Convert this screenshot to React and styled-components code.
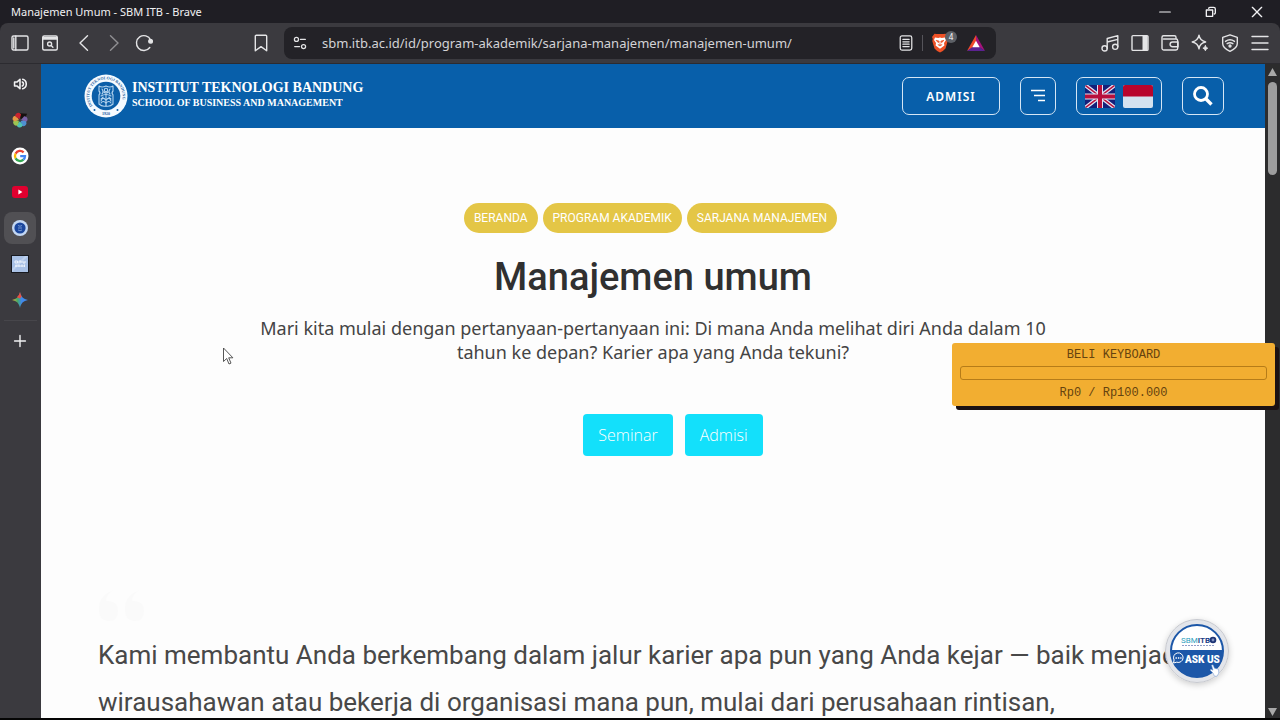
import React from 'react';
import styled, { createGlobalStyle } from 'styled-components';

const GlobalStyle = createGlobalStyle`
  * {
    box-sizing: border-box;
  }
  body {
    margin: 0;
    background: #000000;
    font-family: 'Noto Sans', sans-serif;
  }
  h1, p, ul {
    margin: 0;
    padding: 0;
  }
  button {
    padding: 0;
    border: 0;
    background: none;
    color: inherit;
    font: inherit;
  }
  a {
    color: inherit;
    text-decoration: none;
  }
  svg {
    display: block;
    flex: none;
  }
`;

const Window = styled.div`
  position: relative;
  display: flex;
  flex-direction: column;
  height: 100vh;
  overflow: hidden;
  background: #1f1e24;
  border-bottom: 2px solid #050505;
`;

const TitleBar = styled.header`
  display: flex;
  flex: none;
  align-items: center;
  justify-content: space-between;
  height: 23px;
  padding-left: 11px;
  color: #f1f1f3;
  font-size: 11px;
`;

const WindowButtons = styled.div`
  display: flex;
`;

const WindowButton = styled.button`
  display: grid;
  place-items: center;
  width: 46px;
  height: 23px;
`;

const Toolbar = styled.div`
  display: grid;
  grid-template-columns: 1fr minmax(0, 712px) 1fr;
  flex: none;
  align-items: center;
  height: 41px;
  border-radius: 8px 8px 0 0;
  border-bottom: 1px solid #2c2b30;
  background: #3b3a3f;
  color: #e4e4e6;
`;

const ToolGroup = styled.div`
  display: flex;
  align-items: center;
  justify-content: ${(props) => (props.$end ? 'flex-end' : 'space-between')};
  padding: ${(props) => (props.$end ? '0 5px' : '0 8px 0 5px')};
`;

const NavButtons = styled.div`
  display: flex;
  gap: 4px;
`;

const ToolButton = styled.button`
  display: grid;
  place-items: center;
  width: 30px;
  height: 30px;
  opacity: ${(props) => (props.disabled ? 0.5 : 1)};
`;

const Pair = styled.div`
  display: flex;
`;

const AddressBar = styled.div`
  display: flex;
  align-items: center;
  height: 32px;
  padding: 0 5px 0 8px;
  border-radius: 8px;
  background: #232227;
`;

const AddressInput = styled.input`
  flex: 1;
  min-width: 0;
  margin-left: 14px;
  padding: 0;
  border: 0;
  outline: 0;
  background: none;
  color: #d3d3d6;
  font-family: 'Noto Sans', sans-serif;
  font-size: 13px;
`;

const AddressIcons = styled.div`
  display: flex;
  align-items: center;
  gap: 8px;
`;

const ShieldGroup = styled.div`
  display: flex;
  align-items: center;
  gap: 4px;
`;

const AddressDivider = styled.span`
  width: 1px;
  height: 16px;
  background: #55545a;
`;

const ShieldButton = styled.button`
  position: relative;
  width: 26px;
  height: 24px;
`;

const ShieldCount = styled.span`
  position: absolute;
  top: 0;
  right: 0;
  width: 12px;
  height: 12px;
  border-radius: 6px;
  background: #5d6066;
  color: #ffffff;
  font-size: 8px;
  line-height: 12px;
`;

const Body = styled.div`
  display: flex;
  flex: 1;
  min-height: 0;
`;

const Sidebar = styled.nav`
  display: flex;
  flex: none;
  flex-direction: column;
  gap: 4px;
  width: 41px;
  padding: 4px;
  background: #3b3a3f;
  color: #f1f1f3;
`;

const SideTab = styled.button`
  display: grid;
  place-items: center;
  width: 32px;
  height: 32px;
  border-radius: 8px;
  background: ${(props) => (props.$active ? '#515054' : 'transparent')};
`;

const SideDivider = styled.span`
  height: 1px;
  background: #47464b;
`;

const Page = styled.div`
  flex: 1;
  min-width: 0;
  overflow: hidden;
  background: #fdfdfd;
`;

const SiteHeader = styled.header`
  display: flex;
  align-items: center;
  justify-content: space-between;
  height: 64px;
  padding: 0 41px 0 43px;
  background: #085faa;
  color: #ffffff;
`;

const Brand = styled.a`
  display: flex;
  align-items: center;
  gap: 4px;
  font-family: 'Liberation Serif', serif;
  font-weight: 700;
`;

const BrandText = styled.span`
  padding-bottom: 3px;
`;

const BrandName = styled.span`
  display: block;
  font-size: 14px;
  line-height: 16px;
`;

const BrandSchool = styled.span`
  display: block;
  font-size: 10px;
  line-height: 13px;
`;

const SiteActions = styled.div`
  display: flex;
  gap: 20px;
`;

const OutlineButton = styled.button`
  display: flex;
  align-items: center;
  justify-content: center;
  gap: 8px;
  min-width: ${(props) => props.$width};
  height: 38px;
  border: 1px solid #d5e6f5;
  border-radius: 7px;
  font-size: 12px;
  font-weight: 600;
  letter-spacing: 1px;
`;

const Hero = styled.section`
  display: flex;
  flex-direction: column;
  align-items: center;
  padding-top: 75px;
`;

const Crumbs = styled.nav`
  display: flex;
`;

const Crumb = styled.a`
  margin-right: 5px;
  padding: 0 10px;
  border-radius: 15px;
  background: #e4c646;
  color: #ffffff;
  font-family: Roboto, sans-serif;
  font-size: 12px;
  font-weight: 400;
  line-height: 30px;
`;

const Title = styled.h1`
  margin-top: 20px;
  color: #303030;
  font-family: Roboto, sans-serif;
  font-size: 38px;
  font-weight: 500;
  line-height: 48px;
`;

const Lead = styled.p`
  max-width: 816px;
  margin-top: 15px;
  color: #444444;
  font-size: 18px;
  line-height: 24px;
  text-align: center;
`;

const LinkList = styled.ul`
  display: flex;
  gap: 12px;
  margin-top: 50px;
  padding-left: 40px;
  list-style: none;
`;

const LinkButton = styled.a`
  display: block;
  padding: 0 15px;
  border-radius: 4px;
  background: #13e0fb;
  color: #ffffff;
  font-family: 'Open Sans', sans-serif;
  font-size: 16px;
  font-weight: 300;
  line-height: 42px;
`;

const Quote = styled.section`
  padding: 134px 57px 0;
`;

const QuoteText = styled.p`
  margin-top: 10px;
  color: #484848;
  font-family: Roboto, sans-serif;
  font-size: 26px;
  line-height: 47px;
`;

const ScrollTrack = styled.div`
  display: flex;
  flex: none;
  flex-direction: column;
  align-items: center;
  justify-content: space-between;
  width: 15px;
  padding: 4px 0 2px;
  background: #2c2c2d;
`;

const ScrollThumb = styled.div`
  width: 9px;
  height: 93px;
  margin: 6px 0 auto;
  border-radius: 5px;
  background: #9e9e9e;
`;

const GoalWidget = styled.aside`
  position: absolute;
  top: 343px;
  right: 5px;
  width: 323px;
  padding: 4px 8px 5px;
  border-radius: 3px;
  background: #f2ae31;
  box-shadow: 4px 4px 0 #1b1113;
  color: #65430f;
  font-family: 'Liberation Mono', monospace;
  font-size: 12px;
  line-height: 16px;
  text-align: center;
`;

const GoalProgress = styled.progress`
  display: block;
  width: 100%;
  height: 14px;
  margin: 3px 0 5px;
  border: 1px solid #b67c18;
  border-radius: 3px;
  appearance: none;
  background: transparent;
  &::-webkit-progress-bar {
    background: transparent;
  }
`;

const AskButton = styled.button`
  position: absolute;
  right: 51px;
  bottom: 35px;
  border-radius: 50%;
  box-shadow: 0 2px 6px #00000030;
`;

const Pointer = styled.div`
  position: absolute;
  top: 347px;
  left: 222px;
`;

const Icon = ({ size = 18, children }) => (
  <svg
    width={size}
    height={size}
    viewBox='0 0 18 18'
    fill='none'
    stroke='currentColor'
    strokeWidth='1.4'
    strokeLinecap='round'
    strokeLinejoin='round'
  >
    {children}
  </svg>
);

const toolbarIcons = {
  panel: (
    <>
      <rect x='1' y='2' width='16' height='14' rx='1.5' />
      <path d='M4.8 2v14M2.8 4v10' />
    </>
  ),
  tabSearch: (
    <>
      <rect x='1.7' y='2' width='14.6' height='14' rx='1.5' />
      <path d='M2 3.6h14M2 5h14' />
      <circle cx='8.6' cy='10' r='2' />
      <path d='M10.2 11.6l1.7 1.7' />
    </>
  ),
  back: <path d='M12.5 1.8L5 9l7.5 7.2' />,
  forward: <path d='M5.5 1.8L13 9l-7.5 7.2' />,
  reload: (
    <>
      <path d='M15.6 6A7.4 7.4 0 1 0 14.8 13.5' />
      <circle cx='15.6' cy='7.3' r='1.8' fill='currentColor' />
    </>
  ),
  bookmark: <path d='M3.3 2.2q0-1 1-1h9.4q1 0 1 1v14.6L9 12.6l-5.7 4.2z' />,
  music: (
    <>
      <circle cx='3.6' cy='14.4' r='2.6' />
      <circle cx='14.2' cy='12.8' r='2.6' />
      <path d='M6.2 14.4V4.5L16.8 1.6v11.2M6.2 8l10.6-2.6' />
    </>
  ),
  sidePanel: (
    <>
      <rect x='1' y='1.6' width='16' height='14.8' rx='1' />
      <path d='M11.5 2h5v14h-5z' fill='currentColor' stroke='none' />
    </>
  ),
  wallet: (
    <>
      <path d='M15 5V3.2a1.5 1.5 0 0 0-1.5-1.5h-11A1.5 1.5 0 0 0 1 3.2v11.3A1.7 1.7 0 0 0 2.7 16H15a1.7 1.7 0 0 0 1.7-1.7V6.7A1.7 1.7 0 0 0 15 5H2.5' />
      <path d='M17 8h-5.5a2.4 2.4 0 0 0 0 4.8H17z' />
    </>
  ),
  sparkle: (
    <>
      <path d='M8 1.2C8.6 5.2 10.4 7 14.6 8 10.4 8.8 8.6 10.6 8 14.8 7.3 10.6 5.5 8.8 1.2 8 5.5 7 7.3 5.2 8 1.2z' />
      <path d='M14.4 11.6q.4 2.2 2.4 2.6-2 .5-2.4 2.6-.5-2.1-2.5-2.6 2-.4 2.5-2.6z' fill='currentColor' strokeWidth='.8' />
    </>
  ),
  vpn: (
    <>
      <path d='M9 .8l7.3 2.5v6.2c0 3.3-3.2 6-7.3 7.8-4.1-1.8-7.3-4.5-7.3-7.8V3.3z' />
      <path d='M4.5 7.4Q9 4.2 13.5 7.4M6.1 9.7Q9 7.8 11.9 9.7' />
      <circle cx='9' cy='12' r='1' fill='currentColor' />
    </>
  ),
  menu: <path d='M1 2.5h16M1 9h16M1 15.5h16' />,
};

const rightTools = [
  { icon: 'music', label: 'Musik' },
  { icon: 'sidePanel', label: 'Panel samping' },
  { icon: 'wallet', label: 'Dompet' },
  { icon: 'sparkle', label: 'Asisten' },
  { icon: 'vpn', label: 'VPN' },
  { icon: 'menu', label: 'Menu' },
];

const petals = ['#16100f', '#7a62a8', '#4f8fd0', '#4fc3b4', '#9cc552', '#e39a45', '#c8232f'];

const SpeakerIcon = () => (
  <Icon size={14}>
    <path d='M2 6.500h3l4-3.500v12l-4-3.500H2z' strokeWidth='2' />
    <path d='M12.500 2.800a6.500 6.500 0 0 1 0 12.400M12 6.400a3 3 0 0 1 0 5.200' strokeWidth='2' />
  </Icon>
);

const PetalIcon = () => (
  <svg width='18' height='18' viewBox='-9 -9 18 18'>
    {petals.map((color, index) => (
      <path
        key={color}
        d={index === 0 ? 'M0-1.2L-3.6-5.6 3-9 3.4-5z' : 'M0-1.2L-3-4.6Q-2.8-7.6 0-7.6T3-4.6z'}
        fill={color}
        transform={`rotate(${index * 51.4 + 30})`}
      />
    ))}
  </svg>
);

const GoogleIcon = () => (
  <svg width='18' height='18' viewBox='0 0 18 18' fill='none' strokeWidth='2.3'>
    <circle cx='9' cy='9' r='8.5' fill='#ffffff' />
    <path d='M12.6 5.4A5 5 0 0 0 4.6 6.6' stroke='#ea4335' />
    <path d='M4.6 6.6a5 5 0 0 0 0 4.8' stroke='#fbbc05' />
    <path d='M4.6 11.4a5 5 0 0 0 7.8 1.3' stroke='#34a853' />
    <path d='M12.4 12.7A5 5 0 0 0 14 9.2H9.2' stroke='#4285f4' />
  </svg>
);

const YoutubeIcon = () => (
  <svg width='16' height='12' viewBox='0 0 16 12'>
    <rect width='16' height='12' rx='3' fill='#e0002f' />
    <path d='M6.4 3.6v4.8L10.4 6z' fill='#ffffff' />
  </svg>
);

const CampusIcon = () => (
  <svg width='16' height='16' viewBox='0 0 16 16' fill='none'>
    <circle cx='8' cy='8' r='8' fill='#c3d7f3' />
    <circle cx='8' cy='8' r='5.6' fill='#1b479e' />
    <path d='M6 5.500q2 1.500 4 0M6 8h4M6 10q2 1.500 4 0' stroke='#8aabdd' strokeWidth='.8' />
  </svg>
);

const TileIcon = () => (
  <svg width='18' height='18' viewBox='0 0 18 18' fill='none'>
    <rect x='.5' y='.5' width='17' height='17' fill='#a9c1e6' stroke='#17191f' />
    <path d='M1 14L14 1h3L1 17z' fill='#bed1ee' />
    <path d='M4 6h2.5v2H4zM8 8V6h2v2M12 6v2h2V6M4 11h10M5 9.5V12M8 9.5V12M11 9.5V12M13.5 9.5V12' stroke='#edf3fc' />
  </svg>
);

const GeminiIcon = () => (
  <svg width='16' height='16' viewBox='0 0 16 16'>
    <defs>
      <linearGradient id='gemini' x1='0' y1='.5' x2='1' y2='.5'>
        <stop offset='0' stopColor='#e6b52e' />
        <stop offset='.35' stopColor='#45a96b' />
        <stop offset='.6' stopColor='#4189ea' />
      </linearGradient>
    </defs>
    <path d='M8 0c.9 4.7 3.3 7.1 8 8-4.7.9-7.1 3.3-8 8-.9-4.7-3.3-7.1-8-8 4.7-.9 7.1-3.3 8-8z' fill='url(#gemini)' />
    <path d='M8 0c.3 1.800.9 3.200 1.700 4.500L8 6.500l-3.200-1.200Q7.200 3.800 8 0z' fill='#e84f43' />
  </svg>
);

const sideTabs = [
  { label: 'Suara', icon: <SpeakerIcon /> },
  { label: 'Warna', icon: <PetalIcon /> },
  { label: 'Google', icon: <GoogleIcon /> },
  { label: 'YouTube', icon: <YoutubeIcon /> },
  { label: 'SBM ITB', icon: <CampusIcon />, active: true },
  { label: 'Catatan', icon: <TileIcon /> },
  { label: 'Gemini', icon: <GeminiIcon /> },
];

const Emblem = () => (
  <svg width='44' height='44' viewBox='0 0 44 44' fill='none'>
    <defs>
      <path id='ring' d='M8.600 32A16.700 16.700 0 1 1 35.400 32' />
    </defs>
    <circle cx='22' cy='22' r='21.500' fill='#f5faff' />
    <circle cx='22' cy='22' r='14.300' fill='#0b5ea8' />
    <text fill='#23609e' fontFamily='Liberation Serif, serif' fontSize='4'>
      <textPath href='#ring'>INSTITUT TEKNOLOGI BANDUNG</textPath>
    </text>
    <text x='22' y='41' textAnchor='middle' fill='#23609e' fontFamily='Liberation Serif, serif' fontSize='4'>
      1920
    </text>
    <circle cx='10.500' cy='36' r='1' fill='#0b5ea8' />
    <circle cx='33.500' cy='36' r='1' fill='#0b5ea8' />
    <g stroke='#b5d4ef' strokeWidth='1.100' strokeLinecap='round'>
      <path d='M15 12q3 2 7 0 4 2 7 0M15 12v5q2 2 0 4v9q3 3 7 2 4 1 7-2v-9q-2-2 0-4v-5' />
      <path d='M18 15q2 3 0 5M26 15q-2 3 0 5M20 18q2 2 4 0M17 22q5-3 10 0M17 25q2-2 5 1 3-3 5-1M17 29q2-3 5 0 3-3 5 0' />
      <circle cx='22' cy='16' r='1.700' />
      <path d='M22 20v12M19 23l-2 4M25 23l2 4' />
    </g>
  </svg>
);

const UkFlag = () => (
  <svg width='30' height='23' viewBox='0 0 30 23'>
    <defs>
      <clipPath id='uk'>
        <rect width='30' height='23' rx='2' />
      </clipPath>
    </defs>
    <g clipPath='url(#uk)'>
      <path d='M0 0h30v23H0z' fill='#14207a' />
      <path d='M0 0l30 23M30 0L0 23' stroke='#dfe3f2' strokeWidth='4' />
      <path d='M0 0l30 23M30 0L0 23' stroke='#b8103c' strokeWidth='1.400' />
      <path d='M15 0v23M0 11.500h30' stroke='#dfe3f2' strokeWidth='6' />
      <path d='M15 0v23M0 11.500h30' stroke='#b8103c' strokeWidth='4' />
    </g>
  </svg>
);

const IdFlag = () => (
  <svg width='30' height='23' viewBox='0 0 30 23'>
    <rect width='30' height='23' rx='2' fill='#d4e2ef' />
    <path d='M0 11.500V2q0-2 2-2h26q2 0 2 2v9.500z' fill='#b8052c' />
  </svg>
);

const BraveShield = () => (
  <svg width='18' height='22' viewBox='0 0 18 22'>
    <path d='M5.500 2h7l2-.2L17 5l-.8 2 .5 2-2.200 7.500Q13 18.500 9 20.500 5 18.500 3.500 16.500L1.300 9l.5-2L1 5l2.500-3.200z' fill='#ee5126' />
    <path d='M4 5.500l3.300.6L9 5.500l1.700.6 3.300-.6 1 2.500-2 3 .4 2.500L9 16.800 4.600 13.500 5 11 3 8z' fill='#ffffff' />
    <path d='M5 8.300l3 .8-.6 1.600zM13 8.300l-3 .8.6 1.600zM9 9v3.500M6.800 12.600L9 14l2.200-1.400' fill='#ee5126' stroke='#ee5126' strokeWidth='.7' />
  </svg>
);

const BatIcon = () => (
  <svg width='18' height='16' viewBox='0 0 18 16'>
    <path d='M9 0L0 16l9-5.600z' fill='#ef4a2b' />
    <path d='M9 0l9 16-9-6z' fill='#a5127b' />
    <path d='M0 16h18l-5.500-4h-7z' fill='#5b2291' />
    <path d='M9 5.800l3.700 6.500H5.300z' fill='#ffffff' />
  </svg>
);

const AskBadge = () => (
  <svg width='64' height='64' viewBox='0 0 64 64'>
    <circle cx='32' cy='32' r='31.500' fill='#e3e5ea' stroke='#c7c9cf' />
    <circle cx='32' cy='32' r='26' fill='#ffffff' stroke='#1c57a8' strokeWidth='2' />
    <path d='M6 31h52q1 10-6 18-8 9-20 9t-20-9Q5 41 6 31z' fill='#1c57a8' />
    <text x='16' y='24' fontFamily='Roboto, sans-serif' fontSize='8'>
      <tspan fill='#2c9fc0'>SBM</tspan>
      <tspan fill='#1c3f86' fontWeight='700'>ITB</tspan>
    </text>
    <circle cx='48' cy='21' r='3.300' fill='#1d3474' />
    <circle cx='48' cy='21' r='1.400' fill='#8193c2' />
    <path d='M17 26.500h33' stroke='#8f9dc8' strokeDasharray='2 1' />
    <g fill='none' stroke='#ffffff'>
      <path d='M8.500 44l.6-3a4.800 4.800 0 1 1 2.600 2.200z' />
      <path d='M10.500 39h6' strokeDasharray='1.400 1' strokeWidth='1.400' />
    </g>
    <text x='20' y='44' fill='#ffffff' fontFamily='Roboto, sans-serif' fontSize='10' fontWeight='900'>
      ASK US
    </text>
    <path d='M48 54l-3-3 1-.8 2 1-1.500-5 1.500-.5 1.500 3.500 4 1 .3 4-1.800 3h-2.500z' fill='#ffffff' stroke='#6b93ce' strokeWidth='.5' />
  </svg>
);

const crumbs = ['BERANDA', 'PROGRAM AKADEMIK', 'SARJANA MANAJEMEN'];

const App = () => (
  <>
    <GlobalStyle />
    <Window>
      <TitleBar>
        <span>Manajemen Umum - SBM ITB - Brave</span>
        <WindowButtons>
          <WindowButton aria-label='Kecilkan'>
            <Icon size={12}>
              <path d='M1 9h16' strokeWidth='1.800' />
            </Icon>
          </WindowButton>
          <WindowButton aria-label='Pulihkan'>
            <Icon size={12}>
              <path d='M2 6h9.500v9.500H2zM5.500 3.500Q6 2 8 2h5q2.500 0 2.500 2.500v5.500q0 1.500-1.500 2' strokeWidth='2' />
            </Icon>
          </WindowButton>
          <WindowButton aria-label='Tutup'>
            <Icon size={12}>
              <path d='M2 2l14 14M16 2L2 16' strokeWidth='2' />
            </Icon>
          </WindowButton>
        </WindowButtons>
      </TitleBar>

      <Toolbar>
        <ToolGroup>
          <NavButtons>
            <Pair>
              <ToolButton aria-label='Tab vertikal'>
                <Icon>{toolbarIcons.panel}</Icon>
              </ToolButton>
              <ToolButton aria-label='Cari tab'>
                <Icon>{toolbarIcons.tabSearch}</Icon>
              </ToolButton>
            </Pair>
            <Pair>
              <ToolButton aria-label='Kembali'>
                <Icon>{toolbarIcons.back}</Icon>
              </ToolButton>
              <ToolButton aria-label='Maju' disabled>
                <Icon>{toolbarIcons.forward}</Icon>
              </ToolButton>
              <ToolButton aria-label='Muat ulang'>
                <Icon>{toolbarIcons.reload}</Icon>
              </ToolButton>
            </Pair>
          </NavButtons>
          <ToolButton aria-label='Bookmark'>
            <Icon>{toolbarIcons.bookmark}</Icon>
          </ToolButton>
        </ToolGroup>
        <AddressBar>
          <Icon size={16}>
            <circle cx='5' cy='5' r='2.300' />
            <path d='M9.500 5H15M3 13h5.500' />
            <circle cx='13' cy='13' r='2.300' />
          </Icon>
          <AddressInput
            aria-label='Alamat'
            defaultValue='sbm.itb.ac.id/id/program-akademik/sarjana-manajemen/manajemen-umum/'
          />
          <AddressIcons>
            <Icon size={16}>
              <rect x='2.500' y='1' width='13' height='16' rx='2' />
              <path d='M5.500 5h7M5.500 7.700h7M5.500 10.400h7M5.500 13h7' />
            </Icon>
            <AddressDivider />
            <ShieldGroup>
              <ShieldButton aria-label='Brave Shields'>
                <BraveShield />
                <ShieldCount>4</ShieldCount>
              </ShieldButton>
              <ToolButton aria-label='Brave Rewards'>
                <BatIcon />
              </ToolButton>
            </ShieldGroup>
          </AddressIcons>
        </AddressBar>
        <ToolGroup $end>
          {rightTools.map((tool) => (
            <ToolButton key={tool.icon} aria-label={tool.label}>
              <Icon>{toolbarIcons[tool.icon]}</Icon>
            </ToolButton>
          ))}
        </ToolGroup>
      </Toolbar>

      <Body>
        <Sidebar>
          {sideTabs.map((tab) => (
            <SideTab key={tab.label} aria-label={tab.label} $active={tab.active}>
              {tab.icon}
            </SideTab>
          ))}
          <SideDivider />
          <SideTab aria-label='Tab baru'>
            <Icon size={14}>
              <path d='M9 2v14M2 9h14' strokeWidth='1.800' />
            </Icon>
          </SideTab>
        </Sidebar>

        <Page>
          <SiteHeader>
            <Brand href='#'>
              <Emblem />
              <BrandText>
                <BrandName>INSTITUT TEKNOLOGI BANDUNG</BrandName>
                <BrandSchool>SCHOOL OF BUSINESS AND MANAGEMENT</BrandSchool>
              </BrandText>
            </Brand>
            <SiteActions>
              <OutlineButton $width='98px'>ADMISI</OutlineButton>
              <OutlineButton $width='36px' aria-label='Menu situs'>
                <svg width='16' height='14' viewBox='0 0 16 14' stroke='#ffffff' strokeWidth='1.300'>
                  <path d='M1 1.500h14M4 6.500h11M8 11.500h7' />
                </svg>
              </OutlineButton>
              <OutlineButton $width='86px' aria-label='Bahasa'>
                <UkFlag />
                <IdFlag />
              </OutlineButton>
              <OutlineButton $width='42px' aria-label='Cari'>
                <svg width='20' height='20' viewBox='0 0 20 20' fill='none' stroke='#ffffff'>
                  <circle cx='8' cy='8' r='6.500' strokeWidth='2.800' />
                  <path d='M12.800 12.800l5.700 5.700' strokeWidth='3.400' />
                </svg>
              </OutlineButton>
            </SiteActions>
          </SiteHeader>

          <Hero>
            <Crumbs>
              {crumbs.map((item) => (
                <Crumb href='#' key={item}>
                  {item}
                </Crumb>
              ))}
            </Crumbs>
            <Title>Manajemen umum</Title>
            <Lead>
              Mari kita mulai dengan pertanyaan-pertanyaan ini: Di mana Anda melihat diri Anda dalam
              10 tahun ke depan? Karier apa yang Anda tekuni?
            </Lead>
            <LinkList>
              <li>
                <LinkButton href='#'>Seminar</LinkButton>
              </li>
              <li>
                <LinkButton href='#'>Admisi</LinkButton>
              </li>
            </LinkList>
          </Hero>

          <Quote>
            <svg width='48' height='32' viewBox='0 0 48 32' fill='#fafafa'>
              <path d='M16 0q-8 4-8 11 12-1 12 10 0 10-9 10Q1 31 1 19 1 5 16 0zM42 0q-8 4-8 11 12-1 12 10 0 10-9 10-10 0-10-12Q27 5 42 0z' />
            </svg>
            <QuoteText>
              Kami membantu Anda berkembang dalam jalur karier apa pun yang Anda kejar — baik menjadi
              wirausahawan atau bekerja di organisasi mana pun, mulai dari perusahaan rintisan,
            </QuoteText>
          </Quote>
        </Page>

        <ScrollTrack>
          <svg width='9' height='8' viewBox='0 0 9 8' fill='#a8a8a8'>
            <path d='M4.500 0L9 8H0z' />
          </svg>
          <ScrollThumb />
          <svg width='9' height='8' viewBox='0 0 9 8' fill='#a8a8a8'>
            <path d='M4.500 8L0 0h9z' />
          </svg>
        </ScrollTrack>
      </Body>

      <GoalWidget>
        <label htmlFor='goal'>BELI KEYBOARD</label>
        <GoalProgress id='goal' value='0' max='100000' />
        <p>Rp0 / Rp100.000</p>
      </GoalWidget>
      <AskButton aria-label='Ask us'>
        <AskBadge />
      </AskButton>
      <Pointer>
        <svg width='12' height='19' viewBox='0 0 12 19'>
          <path d='M1.500 1v13.500l3.200-3 2.300 5.500 2-.9-2.300-5.300h4.200z' fill='#ffffff' stroke='#444444' strokeWidth='.9' />
        </svg>
      </Pointer>
    </Window>
  </>
);

export default App;
